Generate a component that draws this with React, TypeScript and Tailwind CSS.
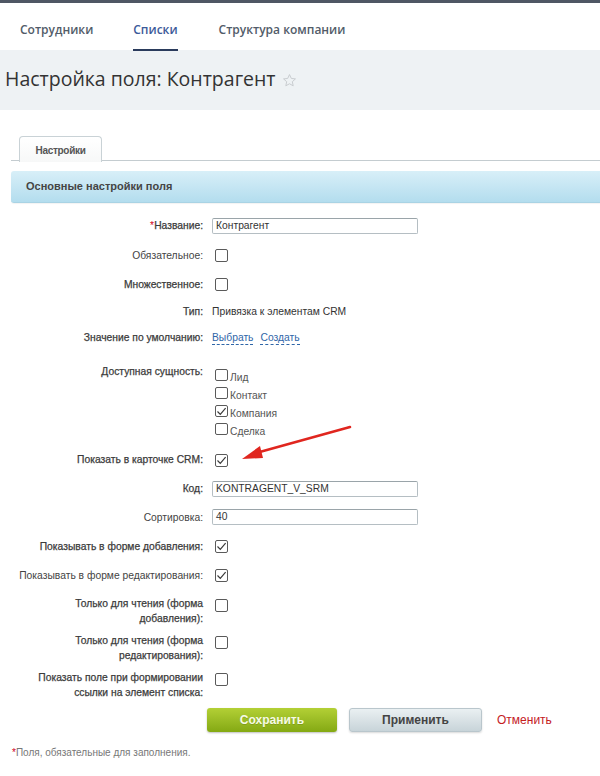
import type { ReactNode } from "react";

const sans = "font-['Liberation_Sans',Arial,sans-serif]";

function Box({ checked = false, small = false }: { checked?: boolean; small?: boolean }) {
  return (
    <span
      className={`flex items-center justify-center border border-[#5a5a5a] bg-white rounded-[2px] shrink-0 ${
        small ? "w-[13px] h-[12px]" : "w-[13px] h-[13px]"
      }`}
    >
      {checked && (
        <svg width="11" height="11" viewBox="0 0 11 11">
          <path d="M1.5 5.5 L4.3 8.3 L9.6 2.2" fill="none" stroke="#3a3a3a" strokeWidth="1.2" />
        </svg>
      )}
    </span>
  );
}

// labels in the reference are regular weight, some just render darker
const dark = "text-[#3b3b3b] [-webkit-text-stroke:0.25px_#3b3b3b]";
const light = "text-[#444]";

function Row({
  label,
  bold = true,
  h,
  children,
  required = false,
}: {
  label: ReactNode;
  bold?: boolean;
  h: string;
  children: ReactNode;
  required?: boolean;
}) {
  return (
    <div className={`flex items-center ${h}`}>
      <div className={`w-[203px] text-right text-[10.3px] leading-[13px] ${bold ? dark : light}`}>
        {required && <span className="text-[#d0021b] [-webkit-text-stroke:0]">*</span>}
        {label}
      </div>
      <div className="ml-[9px] flex items-center">{children}</div>
    </div>
  );
}

function MultiRow({ label, h }: { label: ReactNode; h: string }) {
  return (
    <div className={`flex items-start pt-[6px] ${h}`}>
      <div className={`w-[203px] text-right text-[10.3px] leading-[15px] ${dark}`}>{label}</div>
      <div className="ml-[12px] mt-[3px]">
        <Box />
      </div>
    </div>
  );
}

function Input({ value }: { value: string }) {
  return (
    <div className="w-[206px] h-[16px] border border-[#b5bec3] border-t-[#9aa4a9] rounded-[2px] bg-white pl-[3px] text-[10.3px] leading-[14px] text-[#333]">
      {value}
    </div>
  );
}

function Entity({ label, checked = false }: { label: string; checked?: boolean }) {
  return (
    <div className="flex items-end h-[18px]">
      <Box checked={checked} small />
      <span className="ml-[2px] text-[10.3px] leading-[11px] text-[#555] relative top-[2px]">{label}</span>
    </div>
  );
}

export default function App() {
  return (
    <div className={`w-[600px] h-[776px] bg-white overflow-hidden ${sans}`}>
      <div className="h-[3px] bg-[#4f5764]" />
      <nav className="h-[47px] flex items-stretch pl-[20px] font-['Open_Sans',sans-serif] font-semibold text-[12px]">
        <div className="flex items-center text-[#525c69] pt-[6px]">Сотрудники</div>
        <div className="ml-[40px] flex flex-col justify-center text-[#3c5a9a] relative pt-[6px]">
          Списки
          <span className="absolute left-0 right-0 bottom-[-1px] h-[2px] bg-[#2a3b5c]" />
        </div>
        <div className="ml-[41px] flex items-center text-[#525c69] pt-[6px]">Структура компании</div>
      </nav>
      <div className="h-[60px] bg-[#eef2f4] flex items-center pl-[5px] pb-[2px]">
        <h1 className="font-['Open_Sans',sans-serif] text-[19.5px] text-[#333]">Настройка поля: Контрагент</h1>
        <svg className="ml-[6px] mt-[2px]" width="15" height="15" viewBox="0 0 24 24">
          <path
            d="M12 2.5l2.9 6.2 6.6.7-5 4.5 1.4 6.6L12 17.2l-5.9 3.3 1.4-6.6-5-4.5 6.6-.7z"
            fill="none"
            stroke="#c9cdd0"
            strokeWidth="1.6"
            strokeLinejoin="round"
          />
        </svg>
      </div>

      <div className="pt-[25px] pl-[11px]">
        <div className="border-b border-[#c4ccd0] h-[26px] flex">
          <div className="ml-[8px] w-[83px] h-[26px] border border-b-0 border-[#c9d2d6] rounded-t-[4px] bg-gradient-to-b from-white to-[#f7f8f8] flex items-center justify-center text-[10px] font-bold tracking-[-0.3px] text-[#555] relative top-[1px] pt-[1px]">
            Настройки
          </div>
        </div>
        <div className="mt-[10px] h-[32px] rounded-l-[3px] bg-gradient-to-b from-[#d8eff8] to-[#b3ddee] border-b border-[#a9d3e4] flex items-center pl-[15px] text-[11px] font-bold text-[#454545] shadow-[0_1px_1px_rgba(0,0,0,0.05)]">
          Основные настройки поля
        </div>
      </div>

      <div className="relative pt-[8px]">
        <Row label="Название:" required h="h-[29px]">
          <Input value="Контрагент" />
        </Row>
        <Row label="Обязательное:" bold={false} h="h-[30px]">
          <span className="ml-[3px]">
            <Box />
          </span>
        </Row>
        <Row label="Множественное:" h="h-[28px]">
          <span className="ml-[3px]">
            <Box />
          </span>
        </Row>
        <Row label="Тип:" h="h-[27px]">
          <span className="text-[10.3px] text-[#333]">Привязка к элементам CRM</span>
        </Row>
        <Row label="Значение по умолчанию:" h="h-[25px]">
          <span className="text-[10.3px] leading-[13px] text-[#2f66a8] border-b border-dashed border-[#2f66a8]">
            Выбрать
          </span>
          <span className="ml-[7px] text-[10.3px] leading-[13px] text-[#2f66a8] border-b border-dashed border-[#2f66a8]">
            Создать
          </span>
        </Row>
        <div className="flex items-start h-[93px] pt-[15px]">
          <div className={`w-[203px] text-right text-[10.3px] leading-[13px] ${dark}`}>Доступная сущность:</div>
          <div className="ml-[12px] -mt-[2px]">
            <Entity label="Лид" />
            <Entity label="Контакт" />
            <Entity label="Компания" checked />
            <Entity label="Сделка" />
          </div>
        </div>
        <Row label="Показать в карточке CRM:" h="h-[32px]">
          <span className="ml-[3px] mt-[2px]">
            <Box checked />
          </span>
        </Row>
        <Row label="Код:" h="h-[27px]">
          <Input value="KONTRAGENT_V_SRM" />
        </Row>
        <Row label="Сортировка:" bold={false} h="h-[30px]">
          <Input value="40" />
        </Row>
        <Row label="Показывать в форме добавления:" h="h-[29px]">
          <span className="ml-[3px]">
            <Box checked />
          </span>
        </Row>
        <Row label="Показывать в форме редактирования:" bold={false} h="h-[29px]">
          <span className="ml-[3px]">
            <Box checked />
          </span>
        </Row>
        <MultiRow
          h="h-[37px]"
          label={
            <>
              Только для чтения (форма
              <br />
              добавления):
            </>
          }
        />
        <MultiRow
          h="h-[37px]"
          label={
            <>
              Только для чтения (форма
              <br />
              редактирования):
            </>
          }
        />
        <MultiRow
          h="h-[37px]"
          label={
            <>
              Показать поле при формировании
              <br />
              ссылки на элемент списка:
            </>
          }
        />

        <svg className="absolute left-[236px] top-[222px]" width="120" height="40" viewBox="0 0 120 40">
          <path d="M114 2 L20 28" stroke="#e0261f" strokeWidth="2.6" strokeLinecap="round" />
          <path d="M6 34 L24 21 L27 33 Z" fill="#e0261f" />
        </svg>

        <div className="flex items-center pl-[207px] mt-[7px]">
          <button className="w-[130px] h-[24px] rounded-[3px] bg-gradient-to-b from-[#b3d035] to-[#84a912] text-[12px] font-bold text-[#f6fae6] [text-shadow:0_1px_0_rgba(0,0,0,0.15)] shadow-[0_1px_2px_rgba(0,0,0,0.25)]">
            Сохранить
          </button>
          <button className="ml-[12px] w-[133px] h-[24px] rounded-[3px] border border-[#b9c6cc] bg-gradient-to-b from-[#eaf0f2] to-[#c8d4d9] text-[12px] font-bold text-[#444] shadow-[0_1px_2px_rgba(0,0,0,0.15)]">
            Применить
          </button>
          <span className="ml-[15px] text-[12px] text-[#c4201f]">Отменить</span>
        </div>

        <div className="mt-[14px] pl-[12px] text-[10px] leading-[14px] text-[#777]">
          <span className="text-[#d0021b]">*</span>Поля, обязательные для заполнения.
        </div>
      </div>
    </div>
  );
}
